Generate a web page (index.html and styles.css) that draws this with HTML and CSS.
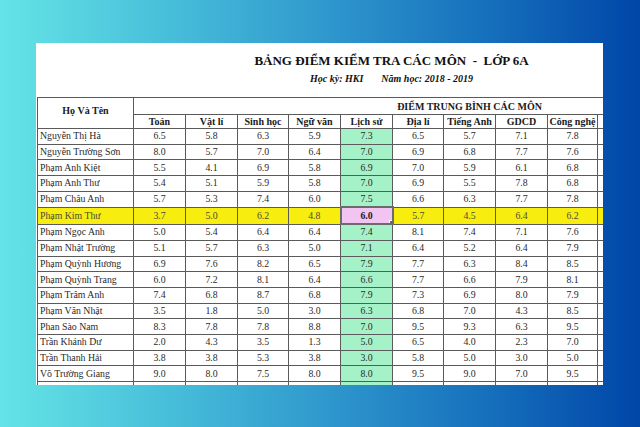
FILE: index.html
```html
<!DOCTYPE html>
<html lang="vi">
<head>
<meta charset="utf-8">
<title>Bảng điểm lớp 6A</title>
<link rel="stylesheet" href="styles.css">
</head>
<body>
<div class="sheet">
  <div class="heading">
    <div class="title">BẢNG ĐIỂM KIỂM TRA CÁC MÔN&nbsp;&nbsp;-&nbsp;&nbsp;LỚP 6A</div>
    <div class="subtitle"><span class="term">Học kỳ: HKI</span>Năm học: 2018 - 2019</div>
  </div>
  <table class="grades">
    <colgroup>
      <col class="c-name"><col class="c52"><col class="c52"><col class="c51"><col class="c52"><col class="c52"><col class="c51"><col class="c52"><col class="c52"><col class="c50"><col class="c52">
    </colgroup>
    <thead>
      <tr class="hrow1"><th rowspan="2" class="name-head">Họ Và Tên</th><th colspan="10" class="group">ĐIỂM TRUNG BÌNH CÁC MÔN</th></tr>
      <tr class="hrow2"><th>Toán</th><th>Vật lí</th><th>Sinh học</th><th>Ngữ văn</th><th>Lịch sử</th><th>Địa lí</th><th>Tiếng Anh</th><th>GDCD</th><th>Công nghệ</th><th></th></tr>
    </thead>
    <tbody>
      <tr><td class="name">Nguyễn Thị Hà</td><td>6.5</td><td>5.8</td><td>6.3</td><td>5.9</td><td class="hist">7.3</td><td>6.5</td><td>5.7</td><td>7.1</td><td>7.8</td><td></td></tr>
      <tr><td class="name">Nguyễn Trường Sơn</td><td>8.0</td><td>5.7</td><td>7.0</td><td>6.4</td><td class="hist">7.0</td><td>6.9</td><td>6.8</td><td>7.7</td><td>7.6</td><td></td></tr>
      <tr><td class="name">Phạm Anh Kiệt</td><td>5.5</td><td>4.1</td><td>6.9</td><td>5.8</td><td class="hist">6.9</td><td>7.0</td><td>5.9</td><td>6.1</td><td>6.8</td><td></td></tr>
      <tr><td class="name">Phạm Anh Thư</td><td>5.4</td><td>5.1</td><td>5.9</td><td>5.8</td><td class="hist">7.0</td><td>6.9</td><td>5.5</td><td>7.8</td><td>6.8</td><td></td></tr>
      <tr><td class="name">Phạm Châu Anh</td><td>5.7</td><td>5.3</td><td>7.4</td><td>6.0</td><td class="hist">7.5</td><td>6.6</td><td>6.3</td><td>7.7</td><td>7.8</td><td></td></tr>
      <tr class="marked"><td class="name">Phạm Kim Thư</td><td>3.7</td><td>5.0</td><td>6.2</td><td>4.8</td><td class="selected">6.0<span class="handle"></span></td><td>5.7</td><td>4.5</td><td>6.4</td><td>6.2</td><td></td></tr>
      <tr><td class="name">Phạm Ngọc Anh</td><td>5.0</td><td>5.4</td><td>6.4</td><td>6.4</td><td class="hist">7.4</td><td>8.1</td><td>7.4</td><td>7.1</td><td>7.6</td><td></td></tr>
      <tr><td class="name">Phạm Nhật Trường</td><td>5.1</td><td>5.7</td><td>6.3</td><td>5.0</td><td class="hist">7.1</td><td>6.4</td><td>5.2</td><td>6.4</td><td>7.9</td><td></td></tr>
      <tr><td class="name">Phạm Quỳnh Hương</td><td>6.9</td><td>7.6</td><td>8.2</td><td>6.5</td><td class="hist">7.9</td><td>7.7</td><td>6.3</td><td>8.4</td><td>8.5</td><td></td></tr>
      <tr><td class="name">Phạm Quỳnh Trang</td><td>6.0</td><td>7.2</td><td>8.1</td><td>6.4</td><td class="hist">6.6</td><td>7.7</td><td>6.6</td><td>7.9</td><td>8.1</td><td></td></tr>
      <tr><td class="name">Phạm Trâm Anh</td><td>7.4</td><td>6.8</td><td>8.7</td><td>6.8</td><td class="hist">7.9</td><td>7.3</td><td>6.9</td><td>8.0</td><td>7.9</td><td></td></tr>
      <tr><td class="name">Phạm Văn Nhật</td><td>3.5</td><td>1.8</td><td>5.0</td><td>3.0</td><td class="hist">6.3</td><td>6.8</td><td>7.0</td><td>4.3</td><td>8.5</td><td></td></tr>
      <tr><td class="name">Phan Sào Nam</td><td>8.3</td><td>7.8</td><td>7.8</td><td>8.8</td><td class="hist">7.0</td><td>9.5</td><td>9.3</td><td>6.3</td><td>9.5</td><td></td></tr>
      <tr><td class="name">Trần Khánh Dư</td><td>2.0</td><td>4.3</td><td>3.5</td><td>1.3</td><td class="hist">5.0</td><td>6.5</td><td>4.0</td><td>2.3</td><td>7.0</td><td></td></tr>
      <tr><td class="name">Trần Thanh Hải</td><td>3.8</td><td>3.8</td><td>5.3</td><td>3.8</td><td class="hist">3.0</td><td>5.8</td><td>5.0</td><td>3.0</td><td>5.0</td><td></td></tr>
      <tr><td class="name">Võ Trường Giang</td><td>9.0</td><td>8.0</td><td>7.5</td><td>8.0</td><td class="hist">8.0</td><td>9.5</td><td>9.0</td><td>7.0</td><td>9.5</td><td></td></tr>
      <tr><td class="name"></td><td></td><td></td><td></td><td></td><td class="hist"></td><td></td><td></td><td></td><td></td><td></td></tr>
    </tbody>
  </table>
</div>
</body>
</html>
```
FILE: styles.css
```css
html, body {
  margin: 0;
  padding: 0;
}
body {
  width: 640px;
  height: 427px;
  overflow: hidden;
  background: linear-gradient(90deg, #64e4e6 0%, #46bcd9 28%, #2e96cc 52%, #1670bc 76%, #0046a8 100%);
  font-family: "Liberation Serif", "Times New Roman", serif;
  color: #1a1a1a;
}
.sheet {
  margin: 43px 0 0 36px;
  width: 567px;
  height: 342px;
  background: #ffffff;
  overflow: hidden;
}
.heading {
  height: 54px;
  box-sizing: border-box;
  padding: 10px 0 0 144px;
  text-align: center;
}
.title {
  font-weight: bold;
  font-size: 13px;
  line-height: 16px;
  color: #111;
}
.subtitle {
  margin-top: 3px;
  font-weight: bold;
  font-style: italic;
  font-size: 10px;
  line-height: 13px;
  color: #111;
}
.term {
  margin-right: 18px;
}
.grades {
  margin-left: 1px;
  border-collapse: collapse;
  table-layout: fixed;
  width: 612px;
  font-size: 9.8px;
}
.c-name { width: 96px; }
.c52 { width: 52px; }
.c51 { width: 51px; }
.c50 { width: 50px; }
.grades th,
.grades td {
  border: 1px solid #5a5a5a;
  padding: 0;
  text-align: center;
  white-space: nowrap;
  overflow: hidden;
}
.grades th {
  font-weight: bold;
  font-size: 10px;
  color: #1a1a1a;
}
.hrow1 th {
  height: 16px;
}
.hrow2 th {
  height: 13px;
}
.group {
  padding-left: 156px !important;
}
.name-head {
  padding-bottom: 6px !important;
}
.grades td {
  height: 14.7px;
  line-height: 14px;
  color: #2a2a2a;
}
.grades td.name {
  text-align: left;
  padding-left: 2px;
}
.hist {
  background: #a6f2c8;
}
.marked td {
  background: #f7ee10;
  color: #4a4a3a;
}
.marked td.selected {
  position: relative;
  background: #f2c4f2;
  border: 2px solid #6b6b6b;
  font-weight: bold;
  color: #1a1a1a;
}
.handle {
  position: absolute;
  right: -3px;
  bottom: -3px;
  width: 4px;
  height: 4px;
  background: #666;
  border: 1px solid #fff;
}
```
